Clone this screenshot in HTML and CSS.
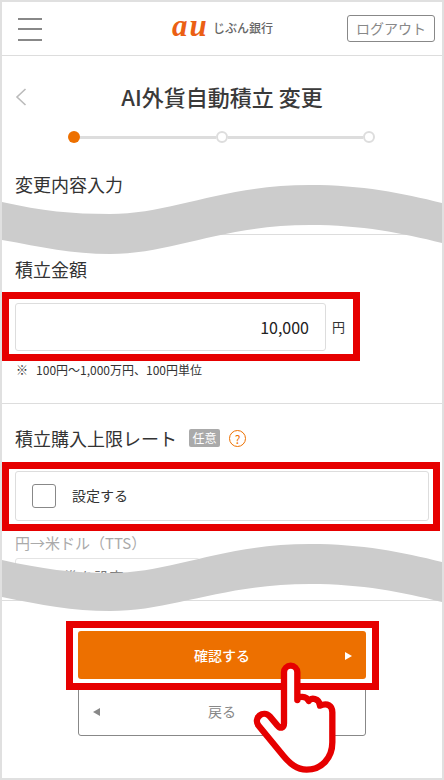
FILE: index.html
```html
<!DOCTYPE html>
<html lang="ja">
<head>
    <meta charset="UTF-8">
    <meta name="viewport" content="width=device-width, initial-scale=1.0">
    <title>AI外貨自動積立 変更</title>
    <link rel="stylesheet" href="styles.css">
</head>
<body>
    <div class="frame">
        <header class="topbar">
            <div class="menu-icon"><span></span><span></span><span></span></div>
            <div class="logo"><span class="logo-au">au</span><span class="logo-name">じぶん銀行</span></div>
            <a class="logout" href="#">ログアウト</a>
        </header>

        <main class="content">
            <div class="title-row">
                <svg class="back-chevron" width="12" height="18" viewBox="0 0 12 18"><path d="M10.5 1 L2 9 L10.5 17" fill="none" stroke="#bbb" stroke-width="1.6"/></svg>
                <h1>AI外貨自動積立 変更</h1>
            </div>

            <div class="steps">
                <span class="step step-active"></span>
                <span class="step-line"></span>
                <span class="step"></span>
                <span class="step-line"></span>
                <span class="step"></span>
            </div>

            <h2 class="section-head">変更内容入力</h2>
            <div class="rule rule-first"></div>

            <h2 class="amount-head">積立金額</h2>
            <div class="red-box amount-box">
                <div class="amount-input">10,000</div>
                <span class="unit">円</span>
            </div>
            <p class="note">※&nbsp;&nbsp;&nbsp;100円〜1,000万円、100円単位</p>
            <div class="rule rule-second"></div>

            <div class="limit-head">
                <h2>積立購入上限レート</h2>
                <span class="badge">任意</span>
                <span class="help">?</span>
            </div>
            <div class="red-box check-box">
                <label class="check-row"><span class="check"></span><span class="check-text">設定する</span></label>
            </div>
            <div class="rate-label">円→米ドル&#xFF08;TTS&#xFF09;</div>
            <div class="rate-input">標準を設定</div>
            <div class="rule rule-third"></div>

            <div class="buttons">
                <div class="red-box confirm-box">
                    <a class="btn-confirm" href="#">確認する<span class="tri-right"></span></a>
                </div>
                <a class="btn-back" href="#"><span class="tri-left"></span>戻る</a>
            </div>
        </main>

        <!-- cut marks over the page -->
        <svg class="wave wave-top" width="440" height="72" viewBox="0 0 440 72"><path d="M0 17 C40 26 70 29 108 29 C170 29 220 0 308 0 C360 0 400 8 440 18 V58 C400 48 360 40 308 40 C220 40 170 69 108 69 C70 69 40 62 0 55 Z" fill="#ccc"/></svg>
        <svg class="wave wave-bottom" width="440" height="72" viewBox="0 0 440 72"><path d="M0 16 C40 25 70 29 108 29 C170 29 220 0 308 0 C360 0 400 8 440 18 V58 C400 48 360 40 308 40 C220 40 170 67 108 67 C70 67 40 61 0 53 Z" fill="#ccc"/></svg>

        <svg class="hand" width="110" height="125" viewBox="0 0 330 375">
            <path d="M132 205 V52 A20 20 0 0 1 172 52 V135 C172 122 200 122 206 138 C212 126 238 130 240 152 C262 142 277 152 277 172 V262 C277 312 242 344 200 344 C170 344 150 326 130 302 L56 212 C38 190 70 162 90 185 L112 211 C120 222 132 220 132 205 Z" fill="#fff" stroke="#e60000" stroke-width="19" stroke-linejoin="round"/>
        </svg>
    </div>
</body>
</html>
```

FILE: styles.css
```css
* {
    box-sizing: border-box;
}
body {
    margin: 0;
    font-family: "Noto Sans CJK JP", "Noto Sans", sans-serif;
    color: #333;
    background-color: #fff;
}
h1, h2, p {
    margin: 0;
    font-weight: 400;
}
a {
    text-decoration: none;
}
.frame {
    position: relative;
    width: 444px;
    height: 780px;
    border: 2px solid #e0e0e0;
    overflow: hidden;
}

/* header */
.topbar {
    display: flex;
    align-items: center;
    justify-content: space-between;
    height: 54px;
    padding: 0 7px 0 16px;
    border-bottom: 1px solid #ddd;
}
.menu-icon {
    display: flex;
    flex-direction: column;
    justify-content: space-between;
    width: 24px;
    height: 23px;
    margin-top: 1px;
}
.menu-icon span {
    height: 2px;
    background-color: #888;
}
.logo {
    display: flex;
    align-items: center;
    width: 101px;
    margin-left: 56px;
    margin-top: -1px;
}
.logo-au {
    width: 36px;
    margin-right: 5px;
    margin-top: -4px;
    font-family: "Liberation Serif", serif;
    font-style: italic;
    font-weight: 700;
    font-size: 31px;
    line-height: 28px;
    letter-spacing: 2px;
    color: #eb5f14;
}
.logo-name {
    font-size: 12px;
    font-weight: 500;
    line-height: 20px;
    color: #666;
    white-space: nowrap;
}
.logout {
    width: 88px;
    height: 27px;
    margin-top: -1px;
    border: 1px solid #888;
    border-radius: 3px;
    color: #888;
    font-size: 14px;
    line-height: 25px;
    text-align: center;
}

/* main column */
.content {
    padding: 0 13px;
}
.title-row {
    position: relative;
    height: 30px;
    margin-top: 25px;
}
.back-chevron {
    position: absolute;
    left: 0;
    top: 7px;
}
h1 {
    font-size: 22px;
    font-weight: 500;
    line-height: 30px;
    text-align: center;
    color: #3a3a3a;
}
.steps {
    display: flex;
    align-items: center;
    width: 307px;
    height: 12px;
    margin: 20px 53px 0;
}
.step {
    flex: none;
    width: 12px;
    height: 12px;
    border: 2px solid #ddd;
    border-radius: 50%;
    background-color: #fff;
}
.step-active {
    border: none;
    background-color: #ed7000;
}
.step-line {
    flex: 1;
    height: 3px;
    background-color: #ddd;
}
.section-head {
    margin-top: 28px;
    font-size: 18px;
    line-height: 26px;
}
.rule {
    height: 1px;
    margin: 0 -13px;
    background-color: #ddd;
}
.rule-first {
    margin-top: 37px;
}
.amount-head {
    margin-top: 21px;
    font-size: 18px;
    line-height: 26px;
}

/* red highlights */
.red-box {
    border: 7px solid #e60000;
    margin-left: -13px;
}
.amount-box {
    display: flex;
    align-items: center;
    width: 358px;
    height: 69px;
    margin-top: 10px;
    padding-left: 6px;
}
.amount-input {
    width: 311px;
    height: 48px;
    padding-right: 16px;
    border: 1px solid #ddd;
    border-radius: 3px;
    font-size: 16px;
    line-height: 46px;
    text-align: right;
    color: #222;
}
.unit {
    margin-left: 6px;
    font-size: 13px;
}
.note {
    margin-top: 1px;
    padding-left: 1px;
    font-size: 12px;
    line-height: 16px;
    white-space: nowrap;
}
.rule-second {
    margin-top: 25px;
}
.limit-head {
    display: flex;
    align-items: center;
    height: 26px;
    margin-top: 21px;
}
.limit-head h2 {
    font-size: 18px;
    line-height: 26px;
    white-space: nowrap;
}
.badge {
    width: 31px;
    height: 18px;
    margin-left: 12px;
    border-radius: 2px;
    background-color: #aaa;
    color: #fff;
    font-size: 12px;
    line-height: 18px;
    text-align: center;
}
.help {
    width: 17px;
    height: 17px;
    margin-left: 9px;
    border: 1px solid #ed7000;
    border-radius: 50%;
    color: #ed7000;
    font-size: 12px;
    line-height: 15px;
    text-align: center;
}
.check-box {
    width: 438px;
    height: 69px;
    margin-top: 11px;
    padding: 2px 4px 3px 6px;
}
.check-row {
    display: flex;
    align-items: center;
    height: 50px;
    padding-left: 16px;
    border: 1px solid #ddd;
    border-radius: 3px;
    font-size: 14px;
}
.check {
    width: 24px;
    height: 24px;
    margin-right: 16px;
    border: 1px solid #888;
    border-radius: 3px;
}
.check-text {
    margin-top: -2px;
}
.rate-label {
    margin-top: 2px;
    font-size: 15px;
    line-height: 20px;
    color: #aaa;
}
.rate-input {
    width: 185px;
    height: 30px;
    margin-top: 5px;
    padding: 8px 0 0 33px;
    border: 1px solid #e4e4e4;
    border-radius: 3px;
    font-size: 15px;
    line-height: 20px;
    color: #777;
}
.rule-third {
    margin-top: 12px;
}

/* buttons */
.buttons {
    display: flex;
    flex-direction: column;
    align-items: center;
    margin-top: 20px;
}
.confirm-box {
    position: relative;
    z-index: 1;
    width: 313px;
    height: 69px;
    margin-left: 1px;
    padding: 3px 6px 4px 5px;
    background-color: transparent;
}
.btn-confirm {
    position: relative;
    display: block;
    height: 48px;
    border-radius: 3px;
    background-color: #ed7000;
    color: #fff;
    font-size: 14px;
    font-weight: 500;
    line-height: 48px;
    text-align: center;
}
.tri-right {
    position: absolute;
    right: 14px;
    top: 21px;
    border-left: 7px solid #fff;
    border-top: 4px solid transparent;
    border-bottom: 4px solid transparent;
}
.btn-back {
    position: relative;
    display: block;
    width: 288px;
    height: 50px;
    margin-top: -4px;
    border: 1px solid #888;
    border-radius: 3px;
    color: #888;
    font-size: 14px;
    line-height: 48px;
    text-align: center;
}
.tri-left {
    position: absolute;
    left: 14px;
    top: 21px;
    border-right: 7px solid #888;
    border-top: 4px solid transparent;
    border-bottom: 4px solid transparent;
}

/* overlays */
.wave {
    position: absolute;
    left: 0;
    z-index: 2;
}
.wave-top {
    top: 183px;
}
.wave-bottom {
    top: 542px;
}
.hand {
    position: absolute;
    left: 238px;
    top: 653px;
    z-index: 3;
}
```
